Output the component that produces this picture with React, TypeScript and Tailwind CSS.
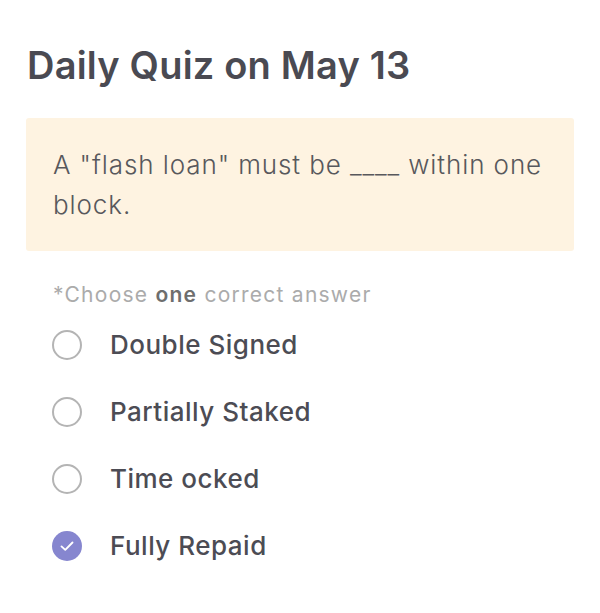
import React from "react";

const options = [
  { label: "Double Signed", checked: false },
  { label: "Partially Staked", checked: false },
  { label: "Time ocked", checked: false },
  { label: "Fully Repaid", checked: true },
];

export default function App() {
  return (
    <div
      className="w-[600px] h-[613px] bg-white px-[26px] pt-[40px]"
      style={{ fontFamily: "Inter, 'Noto Sans', sans-serif" }}
    >
      <h1 className="text-[38px] leading-[50px] font-semibold text-[#4a4a52] tracking-[0.2px] pl-[1px]">
        Daily Quiz on May 13
      </h1>
      <div className="mt-[28px] bg-[#fef3e1] rounded-[3px] pl-[27px] pr-[20px] pt-[27px] pb-[26px]">
        <p className="text-[26px] leading-[40px] text-[#58585c] font-light tracking-[0.9px]">
          A "flash loan" must be ____ within one block.
        </p>
      </div>
      <p className="mt-[30px] pl-[27px] text-[21px] leading-[28px] text-[#ababab] tracking-[1.25px]">
        *Choose <span className="font-semibold text-[#6e6e6e]">one</span> correct answer
      </p>
      <div className="mt-[2px] flex flex-col">
        {options.map((o) => (
          <div key={o.label} className="flex items-center h-[67px] pl-[26px]">
            {o.checked ? (
              <span className="w-[30px] h-[30px] rounded-full bg-[#8686cf] flex items-center justify-center">
                <svg width="20" height="20" viewBox="0 0 16 16" fill="none">
                  <path d="M3.6 8.3 L6.6 11.1 L12.4 5.2" stroke="white" strokeWidth="1.5" strokeLinecap="round" strokeLinejoin="round" />
                </svg>
              </span>
            ) : (
              <span className="w-[30px] h-[30px] rounded-full border-2 border-[#b4b4b4]" />
            )}
            <span className="ml-[28px] text-[26px] font-medium text-[#4c4c54] tracking-[0.5px]">{o.label}</span>
          </div>
        ))}
      </div>
    </div>
  );
}
